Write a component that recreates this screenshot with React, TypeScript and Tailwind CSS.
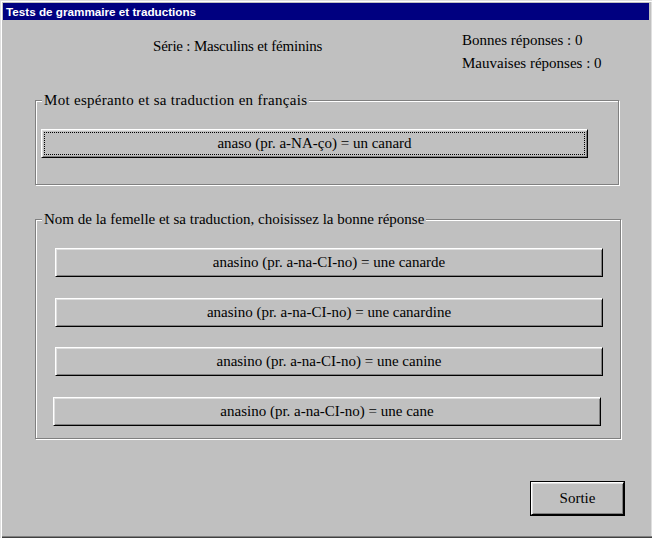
import React from 'react';

const serif = { fontFamily: '"Liberation Serif", "Times New Roman", serif' };

const bevel =
  'flex items-center justify-center bg-[#c0c0c0] border border-t-white border-l-white border-r-black border-b-black shadow-[inset_1px_1px_0_#dfdfdf,inset_-1px_-1px_0_#808080] text-[15px] leading-[17px] text-black';

interface GroupProps {
  label: string;
  className: string;
  labelClass?: string;
  children: React.ReactNode;
}

const GroupBox: React.FC<GroupProps> = ({ label, className, labelClass = '', children }) => (
  <div className={`relative border border-[#808080] shadow-[inset_1px_1px_0_#fff,1px_1px_0_#fff] ${className}`}>
    <span
      className={`absolute left-[6px] top-[-9px] px-[2px] bg-[#c0c0c0] leading-[17px] whitespace-nowrap ${labelClass}`}
    >
      {label}
    </span>
    {children}
  </div>
);

const answers = [
  { text: 'anasino (pr. a-na-CI-no) = une canarde', cls: 'ml-[19px] mt-[28px] w-[548px]' },
  { text: 'anasino (pr. a-na-CI-no) = une canardine', cls: 'ml-[19px] mt-[21px] w-[548px]' },
  { text: 'anasino (pr. a-na-CI-no) = une canine', cls: 'ml-[19px] mt-[20px] w-[548px]' },
  { text: 'anasino (pr. a-na-CI-no) = une cane', cls: 'ml-[17px] mt-[21px] w-[548px]' },
];

export default function App() {
  return (
    <div
      className="w-[652px] h-[538px] bg-[#c0c0c0] flex flex-col overflow-hidden text-black text-[15px] shadow-[inset_1px_1px_0_#dfdfdf,inset_2px_2px_0_#fff,inset_0_-1px_0_#404040,inset_0_-2px_0_#808080,inset_-1px_0_0_#dfdfdf]"
      style={serif}
    >
      {/* Title bar */}
      <div
        className="mx-[3px] mt-[3px] h-[17px] bg-[#000080] pl-[3px] text-white font-bold text-[11.7px] leading-[17px] shrink-0"
        style={{ fontFamily: '"Liberation Sans", Arial, sans-serif' }}
      >
        Tests de grammaire et traductions
      </div>

      {/* Header */}
      <div className="flex h-[80px] shrink-0">
        <div className="w-[462px] shrink-0 pl-[153px] pt-[18px] leading-[17px] tracking-[-0.2px]">
          Série : Masculins et féminins
        </div>
        <div className="pt-[12px] leading-[17px]">
          <div>Bonnes réponses : 0</div>
          <div className="mt-[6px]">Mauvaises réponses : 0</div>
        </div>
      </div>

      <GroupBox
        label="Mot espéranto et sa traduction en français"
        labelClass="tracking-[0.3px]"
        className="ml-[35px] w-[584px] h-[85px] shrink-0"
      >
        <button className={`${bevel} ml-[5px] mt-[28px] w-[547px] h-[29px] p-[2px]`}>
          <span className="flex-1 self-stretch flex items-center justify-center border border-dotted border-black">
            anaso (pr. a-NA-ço) = un canard
          </span>
        </button>
      </GroupBox>

      <GroupBox
        label="Nom de la femelle et sa traduction, choisissez la bonne réponse"
        className="ml-[35px] mt-[34px] w-[586px] h-[220px] shrink-0 flex flex-col"
      >
        {answers.map((a) => (
          <button key={a.text} className={`${bevel} ${a.cls} h-[29px]`}>
            {a.text}
          </button>
        ))}
      </GroupBox>

      <div className="ml-[530px] mt-[42px] w-[95px] h-[35px] border border-black flex shrink-0">
        <button className={`${bevel} flex-1`}>Sortie</button>
      </div>
    </div>
  );
}
